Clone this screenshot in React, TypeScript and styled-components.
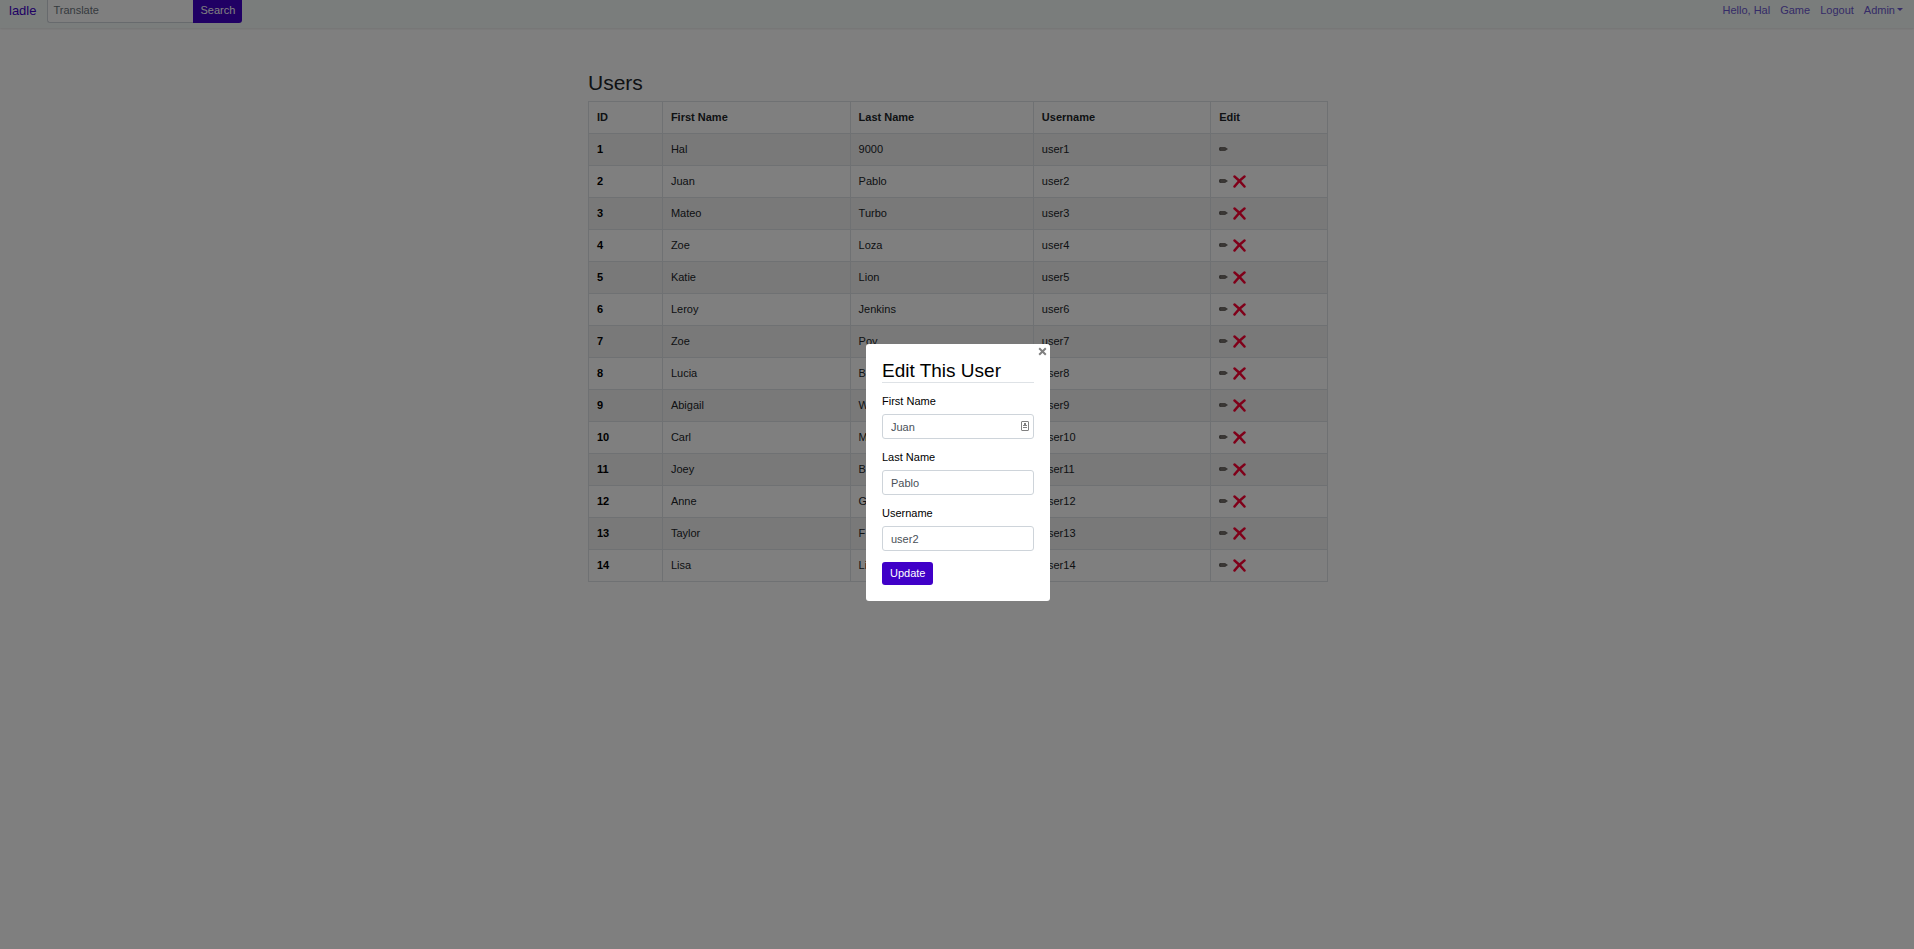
import React from "react";
import styled, { createGlobalStyle } from "styled-components";

const GlobalStyle = createGlobalStyle`
  *, *::before, *::after { box-sizing: border-box; }
  body {
    margin: 0;
    background: #ffffff;
    color: #212529;
    font: 400 11px/16px "Liberation Sans", Arial, sans-serif;
  }
  input, button { font: inherit; margin: 0; }
`;

const Navbar = styled.nav`
  display: flex;
  align-items: flex-start;
  height: 28px;
  padding: 0 11px 0 9px;
  background: #f4fbf8;
  box-shadow: 0 1px 2px rgba(0, 0, 0, 0.1);
`;

const Brand = styled.a`
  margin-right: 11px;
  color: #4000c8;
  font-size: 13px;
  line-height: 21px;
  text-decoration: none;
`;

const SearchForm = styled.form`
  display: flex;
`;

const SearchInput = styled.input`
  width: 146px;
  height: 23px;
  padding: 0 5px 3px;
  border: 1px solid #ced4da;
  border-width: 0 0 1px 1px;
  border-radius: 0 0 0 3px;
  background: #ffffff;
  &::placeholder { color: #6c757d; opacity: 1; }
`;

const Button = styled.button<{ $attached?: boolean }>`
  height: 23px;
  padding: ${(p) => (p.$attached ? "0 7px 3px" : "0 8px 1px")};
  border: 0;
  border-radius: ${(p) => (p.$attached ? "0 0 3px 0" : "3px")};
  background: #4000c8;
  color: #ffffff;
  cursor: pointer;
`;

const NavLinks = styled.div`
  display: flex;
  gap: 10px;
  margin-left: auto;
`;

const NavLink = styled.a`
  display: flex;
  align-items: center;
  gap: 2px;
  color: #6b56d0;
  line-height: 20px;
  text-decoration: none;
`;

const Caret = styled.span`
  margin-bottom: 2px;
  border: 3px solid transparent;
  border-top-color: currentColor;
  border-bottom: 0;
`;

const Main = styled.main`
  width: 742px;
  max-width: 100%;
  margin: 42px auto 0;
  padding-left: 2px;
`;

const Title = styled.h1`
  margin: 0 0 6px;
  font-size: 21px;
  font-weight: 400;
  line-height: 25px;
`;

const Table = styled.table`
  width: 100%;
  table-layout: fixed;
  border-collapse: collapse;
  th, td {
    height: 32px;
    padding: 0 8px 2px;
    border: 1px solid #dee2e6;
    text-align: left;
  }
  tbody tr:nth-child(odd) { background: #f2f2f2; }
  tbody th { color: #000000; }
`;

const Col = styled.col<{ $width?: number }>`
  width: ${(p) => (p.$width ? `${p.$width}%` : "auto")};
`;

const Actions = styled.div`
  display: flex;
  align-items: center;
  gap: 5px;
  padding-top: 1px;
`;

const IconButton = styled.button`
  display: flex;
  padding: 0;
  border: 0;
  background: none;
  cursor: pointer;
`;

const Overlay = styled.div`
  position: fixed;
  inset: 0;
  display: flex;
  align-items: center;
  justify-content: center;
  padding: 0 0 4px 2px;
  background: rgba(0, 0, 0, 0.5);
`;

const Modal = styled.section`
  position: relative;
  width: 184px;
  padding: 16px;
  border-radius: 3px;
  background: #ffffff;
  color: #000000;
`;

const Close = styled.button`
  position: absolute;
  top: 3px;
  right: 3px;
  display: flex;
  padding: 0;
  border: 0;
  background: none;
  cursor: pointer;
`;

const ModalTitle = styled.h2`
  margin: 0 0 10px;
  border-bottom: 1px solid #dee2e6;
  font-size: 19px;
  font-weight: 400;
  line-height: 22px;
`;

const Fields = styled.div`
  display: flex;
  flex-direction: column;
  gap: 10px;
  margin-bottom: 11px;
`;

const Field = styled.div`
  position: relative;
`;

const Label = styled.label`
  display: block;
  margin-bottom: 5px;
`;

const TextInput = styled.input`
  display: block;
  width: 100%;
  height: 25px;
  padding: 0 8px;
  border: 1px solid #ced4da;
  border-radius: 3px;
  background: #ffffff;
  color: #495057;
`;

const FieldBadge = styled.span`
  position: absolute;
  right: 5px;
  bottom: 8px;
  display: flex;
`;

const users = [
  ["Hal", "9000"],
  ["Juan", "Pablo"],
  ["Mateo", "Turbo"],
  ["Zoe", "Loza"],
  ["Katie", "Lion"],
  ["Leroy", "Jenkins"],
  ["Zoe", "Poy"],
  ["Lucia", "B"],
  ["Abigail", "W"],
  ["Carl", "M"],
  ["Joey", "B"],
  ["Anne", "G"],
  ["Taylor", "F"],
  ["Lisa", "Li"],
];

const fields = [
  { id: "first-name", label: "First Name", value: "Juan", badge: true },
  { id: "last-name", label: "Last Name", value: "Pablo", badge: false },
  { id: "username", label: "Username", value: "user2", badge: false },
];

const PencilIcon = () => (
  <svg width="9" height="6" viewBox="0 0 9 6" aria-hidden="true">
    <path d="M1 1h5l3 2-3 2H1L0 4V2z" fill="#6b6663" />
    <path d="M2 2h4M2 4h4" stroke="#8b8580" strokeWidth="0.6" />
  </svg>
);

const CrossIcon = () => (
  <svg width="13" height="13" viewBox="0 0 13 13" aria-hidden="true">
    <path d="M1.5 1.5Q6 5 11.5 11.5M11.5 1.5Q6 5.5 1.5 11.5" fill="none" stroke="#ff0033" strokeWidth="2.5" strokeLinecap="round" />
  </svg>
);

const CloseIcon = () => (
  <svg width="9" height="9" viewBox="0 0 9 9" aria-hidden="true">
    <path d="M1.2 1.2l6.6 6.6M7.8 1.2L1.2 7.8" stroke="#808080" strokeWidth="2" />
  </svg>
);

const ContactIcon = () => (
  <svg width="8" height="10" viewBox="0 0 8 10" aria-hidden="true">
    <rect x="0.5" y="0.5" width="7" height="9" rx="0.5" fill="none" stroke="#808080" />
    <path d="M3 2h2v2h1v1H2V4h1zM2 6h4v1H2z" fill="#808080" />
  </svg>
);

export default function App() {
  return (
    <>
      <GlobalStyle />
      <Navbar>
        <Brand href="#">ladle</Brand>
        <SearchForm onSubmit={(e: React.FormEvent) => e.preventDefault()}>
          <SearchInput placeholder="Translate" aria-label="Translate" />
          <Button $attached type="submit">Search</Button>
        </SearchForm>
        <NavLinks>
          <NavLink href="#">Hello, Hal</NavLink>
          <NavLink href="#">Game</NavLink>
          <NavLink href="#">Logout</NavLink>
          <NavLink href="#">Admin<Caret /></NavLink>
        </NavLinks>
      </Navbar>
      <Main>
        <Title>Users</Title>
        <Table>
          <colgroup>
            <Col $width={10} />
            <Col $width={25.4} />
            <Col $width={24.8} />
            <Col $width={24} />
            <Col />
          </colgroup>
          <thead>
            <tr>
              <th scope="col">ID</th>
              <th scope="col">First Name</th>
              <th scope="col">Last Name</th>
              <th scope="col">Username</th>
              <th scope="col">Edit</th>
            </tr>
          </thead>
          <tbody>
            {users.map(([first, last], i) => (
              <tr key={i}>
                <th scope="row">{i + 1}</th>
                <td>{first}</td>
                <td>{last}</td>
                <td>user{i + 1}</td>
                <td>
                  <Actions>
                    <IconButton aria-label="Edit user"><PencilIcon /></IconButton>
                    {i > 0 && <IconButton aria-label="Delete user"><CrossIcon /></IconButton>}
                  </Actions>
                </td>
              </tr>
            ))}
          </tbody>
        </Table>
      </Main>
      <Overlay>
        <Modal role="dialog" aria-modal="true" aria-labelledby="dialog-title">
          <Close aria-label="Close"><CloseIcon /></Close>
          <ModalTitle id="dialog-title">Edit This User</ModalTitle>
          <form onSubmit={(e: React.FormEvent) => e.preventDefault()}>
            <Fields>
              {fields.map((f) => (
                <Field key={f.id}>
                  <Label htmlFor={f.id}>{f.label}</Label>
                  <TextInput id={f.id} defaultValue={f.value} />
                  {f.badge && <FieldBadge><ContactIcon /></FieldBadge>}
                </Field>
              ))}
            </Fields>
            <Button type="submit">Update</Button>
          </form>
        </Modal>
      </Overlay>
    </>
  );
}
